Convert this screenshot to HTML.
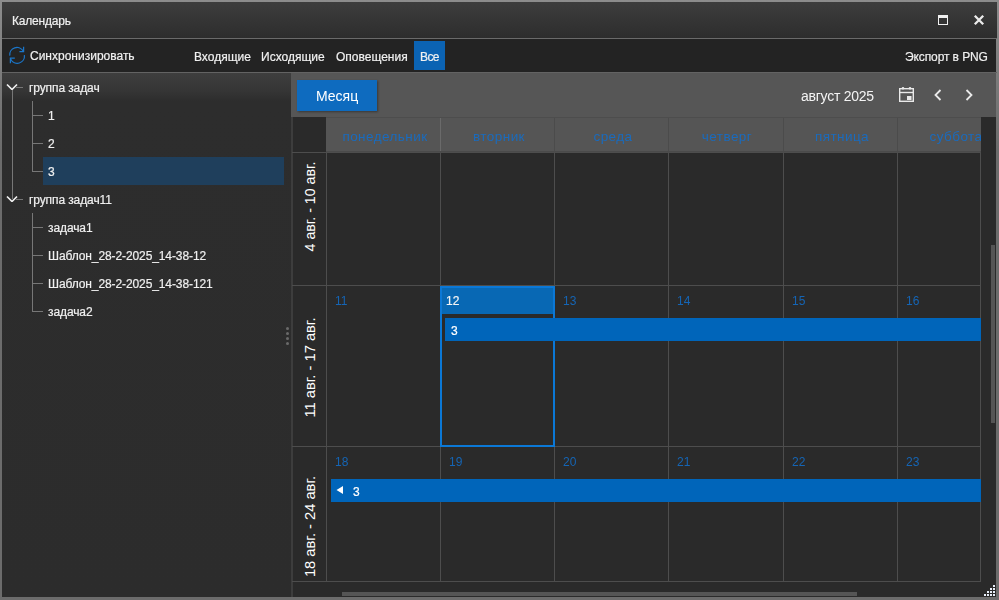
<!DOCTYPE html>
<html><head><meta charset="utf-8">
<style>
*{margin:0;padding:0;box-sizing:border-box}
html,body{width:999px;height:600px;overflow:hidden;background:#7a7a7a;font-family:"Liberation Sans",sans-serif;color:#fff}
.a{position:absolute}
.t{position:absolute;white-space:nowrap;line-height:1;will-change:transform}
.s{-webkit-text-stroke:0.2px currentColor}
#win{position:absolute;left:0;top:0;width:999px;height:600px;background:linear-gradient(#8c8c8c,#6c6c6c 150px,#6c6c6c)}
#title{left:2px;top:2px;width:995px;height:36px;background:linear-gradient(#3d3d3d,#2d2d2d)}
#tb{left:2px;top:39px;width:994px;height:33px;background:#232323}
#left{left:2px;top:73px;width:289px;height:524px;background:linear-gradient(#3e3e3e,#363636 17px,#2d2d2d 28px,#2c2c2c)}
#right{left:291px;top:73px;width:705px;height:524px;background:#272727;overflow:hidden}
.tl{background:#8a8a8a}
</style></head><body>
<div id="win">
  <div id="title" class="a"></div>
  <div class="t s" style="left:12px;top:15px;font-size:12px;letter-spacing:-0.2px;color:#f0f0f0">Календарь</div>
  <!-- maximize -->
  <div class="a" style="left:938px;top:15px;width:10px;height:10px;border:1px solid #f0f0f0;border-top-width:3px"></div>
  <!-- close -->
  <svg class="a" style="left:973px;top:14px" width="12" height="12" viewBox="0 0 12 12"><path d="M1.8 1.8L10.2 10.2M10.2 1.8L1.8 10.2" stroke="#ececec" stroke-width="2.3"/></svg>
  <div class="a" style="left:2px;top:38px;width:995px;height:1px;background:#6a6a6a"></div>

  <div id="tb" class="a"></div>
  <svg class="a" style="left:5px;top:43px" width="24" height="24" viewBox="5 43 24 24">
    <g fill="none" stroke="#1b76c9" stroke-width="1.25">
    <path d="M9.8 55.6A7.2 7.2 0 0 1 23.3 51.3"/>
    <path d="M24.4 55.2A7.2 7.2 0 0 1 10.8 59.3"/>
    <path d="M23.6 46.8V51.6H19.4"/>
    <path d="M10.4 63.2V58.2H14.8"/>
    </g>
  </svg>
  <div class="t s" style="left:30px;top:50px;font-size:12px;color:#f0f0f0">Синхронизировать</div>
  <div class="t s" style="left:194px;top:51px;font-size:12px;color:#f0f0f0">Входящие</div>
  <div class="t s" style="left:261px;top:51px;font-size:12px;color:#f0f0f0">Исходящие</div>
  <div class="t s" style="left:336px;top:51px;font-size:12px;color:#f0f0f0">Оповещения</div>
  <div class="a" style="left:414px;top:41px;width:31px;height:29px;background:#0b63b3"></div>
  <div class="t s" style="left:420px;top:51px;font-size:12px;letter-spacing:-0.6px;color:#f0f0f0">Все</div>
  <div class="t s" style="left:905px;top:51px;font-size:12px;letter-spacing:-0.1px;color:#f0f0f0">Экспорт в PNG</div>
  <div class="a" style="left:2px;top:72px;width:995px;height:1px;background:#636363"></div>

  <div id="left" class="a"></div>
  <!-- tree -->

  <div class="a" style="left:43px;top:157px;width:241px;height:28px;background:#1f3f5c"></div>
  <svg class="a" style="left:0;top:73px" width="60" height="250" viewBox="0 73 60 250">
    <g stroke="#777" stroke-width="1" fill="none" shape-rendering="crispEdges">
      <path d="M12.5 90V199M16 87.5H23M16 199.5H23"/>
      <path d="M32.5 101V171.5M33 115.5H43M33 143.5H43M33 171.5H43"/>
      <path d="M32.5 213V311.5M33 227.5H43M33 255.5H43M33 283.5H43M33 311.5H43"/>
    </g>
    <g stroke="#f0f0f0" stroke-width="1.7" fill="none" stroke-linejoin="bevel">
      <path d="M7 84.5L12 89.5L17 84.5"/>
      <path d="M7 196.5L12 201.5L17 196.5"/>
    </g>
  </svg>
  <div class="t s" style="left:29px;top:82px;font-size:12px;letter-spacing:-0.1px;color:#f0f0f0">группа задач</div>
  <div class="t s" style="left:48px;top:110px;font-size:12px;color:#f0f0f0">1</div>
  <div class="t s" style="left:48px;top:138px;font-size:12px;color:#f0f0f0">2</div>
  <div class="t s" style="left:48px;top:166px;font-size:12px;color:#f0f0f0">3</div>
  <div class="t s" style="left:29px;top:194px;font-size:12px;letter-spacing:-0.1px;color:#f0f0f0">группа задач11</div>
  <div class="t s" style="left:48px;top:222px;font-size:12px;letter-spacing:-0.1px;color:#f0f0f0">задача1</div>
  <div class="t s" style="left:48px;top:250px;font-size:12px;letter-spacing:-0.1px;color:#f0f0f0">Шаблон_28-2-2025_14-38-12</div>
  <div class="t s" style="left:48px;top:278px;font-size:12px;letter-spacing:-0.1px;color:#f0f0f0">Шаблон_28-2-2025_14-38-121</div>
  <div class="t s" style="left:48px;top:306px;font-size:12px;letter-spacing:-0.1px;color:#f0f0f0">задача2</div>
  <div class="a" style="left:286px;top:327px;width:3px;height:3px;background:#6a6a6a;border-radius:50%"></div><div class="a" style="left:286px;top:332px;width:3px;height:3px;background:#6a6a6a;border-radius:50%"></div><div class="a" style="left:286px;top:337px;width:3px;height:3px;background:#6a6a6a;border-radius:50%"></div><div class="a" style="left:286px;top:342px;width:3px;height:3px;background:#6a6a6a;border-radius:50%"></div>


  <div id="right" class="a"></div>
<div class="a" style="left:291px;top:73px;width:705px;height:44px;background:#565656"></div>
<div class="a" style="left:297px;top:80px;width:80px;height:31px;background:#0e6bbf;box-shadow:1px 1px 2px rgba(0,0,0,.35)"></div>
<div class="t" style="left:316px;top:89px;font-size:14px;color:#fff">Месяц</div>
<div class="t" style="left:801px;top:89px;font-size:14px;letter-spacing:-0.25px;color:#f4f4f4">август 2025</div>
<svg class="a" style="left:898px;top:86px" width="17" height="17" viewBox="0 0 17 17">
<g fill="none" stroke="#eaeaea" stroke-width="1.4"><rect x="1.7" y="2.7" width="13.6" height="12.6"/><path d="M1.7 6.5H15.3"/></g>
<rect x="9" y="10" width="4.5" height="4" fill="#eaeaea"/>
<g fill="#eaeaea"><circle cx="5" cy="2.2" r="1.3"/><circle cx="12" cy="2.2" r="1.3"/></g></svg>
<svg class="a" style="left:932px;top:87px" width="12" height="16" viewBox="0 0 12 16"><path d="M8.5 3L3.5 8L8.5 13" fill="none" stroke="#eaeaea" stroke-width="1.8"/></svg>
<svg class="a" style="left:963px;top:87px" width="12" height="16" viewBox="0 0 12 16"><path d="M3.5 3L8.5 8L3.5 13" fill="none" stroke="#eaeaea" stroke-width="1.8"/></svg>
<div class="a" style="left:292px;top:117px;width:689px;height:480px;background:#2a2a2a"></div>
<div class="a" style="left:291px;top:117px;width:2px;height:480px;background:#3d3d3d"></div>
<div class="a" style="left:326px;top:118px;width:655px;height:33px;background:#555"></div>
<div class="a" style="left:326px;top:117px;width:655px;height:1px;background:#4d4d4d"></div>
<div class="a" style="left:326px;top:151px;width:655px;height:1px;background:#4a4a4a"></div>
<div class="t" style="left:325px;width:120px;text-align:center;top:130px;font-size:13.5px;letter-spacing:0.45px;color:#1a6bbd">понедельник</div>
<div class="a" style="left:440px;top:118px;width:1px;height:33px;background:#6a6a6a"></div>
<div class="t" style="left:439px;width:120px;text-align:center;top:130px;font-size:13.5px;letter-spacing:0.45px;color:#1a6bbd">вторник</div>
<div class="a" style="left:554px;top:118px;width:1px;height:33px;background:#4b4b4b"></div>
<div class="t" style="left:553px;width:120px;text-align:center;top:130px;font-size:13.5px;letter-spacing:0.45px;color:#1a6bbd">среда</div>
<div class="a" style="left:668px;top:118px;width:1px;height:33px;background:#4b4b4b"></div>
<div class="t" style="left:667px;width:120px;text-align:center;top:130px;font-size:13.5px;letter-spacing:0.45px;color:#1a6bbd">четверг</div>
<div class="a" style="left:783px;top:118px;width:1px;height:33px;background:#4b4b4b"></div>
<div class="t" style="left:782px;width:120px;text-align:center;top:130px;font-size:13.5px;letter-spacing:0.45px;color:#1a6bbd">пятница</div>
<div class="a" style="left:897px;top:118px;width:1px;height:33px;background:#4b4b4b"></div>
<div class="t" style="left:896px;width:120px;text-align:center;top:130px;font-size:13.5px;letter-spacing:0.45px;color:#1a6bbd">суббота</div>
<div class="a" style="left:981px;top:117px;width:15px;height:480px;background:#2a2a2a"></div>
<div class="a" style="left:292px;top:152px;width:689px;height:1px;background:#4d4d4d"></div>
<div class="a" style="left:292px;top:285px;width:689px;height:1px;background:#4d4d4d"></div>
<div class="a" style="left:292px;top:446px;width:689px;height:1px;background:#4d4d4d"></div>
<div class="a" style="left:292px;top:581px;width:689px;height:1px;background:#4d4d4d"></div>
<div class="a" style="left:326px;top:152px;width:1px;height:430px;background:#4d4d4d"></div>
<div class="a" style="left:440px;top:152px;width:1px;height:430px;background:#4d4d4d"></div>
<div class="a" style="left:554px;top:152px;width:1px;height:430px;background:#4d4d4d"></div>
<div class="a" style="left:668px;top:152px;width:1px;height:430px;background:#4d4d4d"></div>
<div class="a" style="left:783px;top:152px;width:1px;height:430px;background:#4d4d4d"></div>
<div class="a" style="left:897px;top:152px;width:1px;height:430px;background:#4d4d4d"></div>
<div class="a" style="left:980px;top:152px;width:1px;height:430px;background:#4d4d4d"></div>

<div class="a" style="left:292px;top:153px;width:34px;height:428px;overflow:hidden">
<div class="t" style="left:-62px;top:45.5px;width:160px;height:15px;text-align:center;font-size:14.2px;color:#fff;will-change:auto;transform:rotate(-90deg)">4 авг. - 10 авг.</div>
<div class="t" style="left:-62px;top:206.5px;width:160px;height:15px;text-align:center;font-size:14.7px;color:#fff;will-change:auto;transform:rotate(-90deg)">11 авг. - 17 авг.</div>
<div class="t" style="left:-62px;top:365.5px;width:160px;height:15px;text-align:center;font-size:14.7px;color:#fff;will-change:auto;transform:rotate(-90deg)">18 авг. - 24 авг.</div>
</div>
<div class="a" style="left:440px;top:286px;width:115px;height:161px;border:2px solid #0b78d6"></div>
<div class="a" style="left:442px;top:288px;width:111px;height:26px;background:#0868b4"></div>
<div class="t" style="left:335px;top:295px;font-size:12px;color:#1565b5">11</div>
<div class="t s" style="left:446px;top:295px;font-size:12px;color:#f4f4f4">12</div>
<div class="t" style="left:563px;top:295px;font-size:12px;color:#1565b5">13</div>
<div class="t" style="left:677px;top:295px;font-size:12px;color:#1565b5">14</div>
<div class="t" style="left:792px;top:295px;font-size:12px;color:#1565b5">15</div>
<div class="t" style="left:906px;top:295px;font-size:12px;color:#1565b5">16</div>
<div class="t" style="left:335px;top:456px;font-size:12px;color:#1565b5">18</div>
<div class="t" style="left:449px;top:456px;font-size:12px;color:#1565b5">19</div>
<div class="t" style="left:563px;top:456px;font-size:12px;color:#1565b5">20</div>
<div class="t" style="left:677px;top:456px;font-size:12px;color:#1565b5">21</div>
<div class="t" style="left:792px;top:456px;font-size:12px;color:#1565b5">22</div>
<div class="t" style="left:906px;top:456px;font-size:12px;color:#1565b5">23</div>
<div class="a" style="left:445px;top:318px;width:536px;height:23px;background:#0065ba"></div>
<div class="t s" style="left:451px;top:325px;font-size:12px;color:#fff">3</div>
<div class="a" style="left:331px;top:479px;width:650px;height:23px;background:#0065ba"></div>
<svg class="a" style="left:335px;top:485px" width="10" height="10" viewBox="0 0 10 10"><path d="M1.5 5L8 1V9Z" fill="#fff"/></svg>
<div class="t s" style="left:353px;top:486px;font-size:12px;color:#fff">3</div>
<div class="a" style="left:991px;top:245px;width:4px;height:178px;background:#555"></div>
<div class="a" style="left:342px;top:592px;width:515px;height:4px;background:#555"></div>
<div class="a" style="left:993px;top:585px;width:2px;height:2px;background:#e8eef8"></div>
<div class="a" style="left:990px;top:588px;width:2px;height:2px;background:#e8eef8"></div>
<div class="a" style="left:993px;top:588px;width:2px;height:2px;background:#e8eef8"></div>
<div class="a" style="left:987px;top:591px;width:2px;height:2px;background:#e8eef8"></div>
<div class="a" style="left:990px;top:591px;width:2px;height:2px;background:#e8eef8"></div>
<div class="a" style="left:993px;top:591px;width:2px;height:2px;background:#e8eef8"></div>
<div class="a" style="left:984px;top:594px;width:2px;height:2px;background:#e8eef8"></div>
<div class="a" style="left:987px;top:594px;width:2px;height:2px;background:#e8eef8"></div>
<div class="a" style="left:990px;top:594px;width:2px;height:2px;background:#e8eef8"></div>
<div class="a" style="left:993px;top:594px;width:2px;height:2px;background:#e8eef8"></div>
</div>
</body></html>
